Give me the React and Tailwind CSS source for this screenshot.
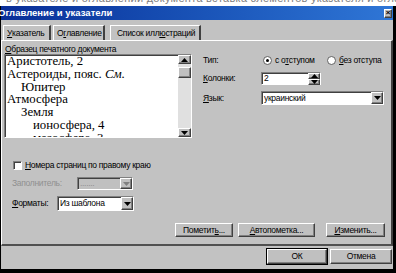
import React from "react";

const raised =
  "border border-t-white border-l-white border-r-[#404040] border-b-[#404040] shadow-[inset_-1px_-1px_0_#808080] bg-[#c0c0c0]";
const sunken =
  "border border-t-[#808080] border-l-[#808080] border-r-white border-b-white shadow-[inset_1px_1px_0_#404040]";

const U = ({ children }) => <span className="underline underline-offset-1">{children}</span>;

const Arrow = ({ up, gray }) => (
  <svg width="7" height="4" viewBox="0 0 7 4">
    <path d={up ? "M0 4h7L3.5 0z" : "M0 0h7L3.5 4z"} fill={gray ? "#808080" : "#000"} />
  </svg>
);

const Radio = ({ checked }) => (
  <span className="w-[9px] h-[9px] rounded-full bg-white border border-[#606060] flex items-center justify-center">
    {checked && <span className="w-[3px] h-[3px] rounded-full bg-black" />}
  </span>
);

const Select = ({ value, width, height, disabled }) => (
  <div
    className={`${sunken} flex items-stretch ${disabled ? "bg-[#c0c0c0]" : "bg-white"}`}
    style={{ width, height }}
  >
    <span className={`flex-1 pl-[2px] flex items-center whitespace-nowrap ${disabled ? "text-[#909090]" : "text-black"}`}>
      {value}
    </span>
    <span className={`${raised} w-[12px] flex items-center justify-center`}>
      <Arrow gray={disabled} />
    </span>
  </div>
);

const Button = ({ children, w, h, def }) => (
  <div
    className={`${raised} flex items-center justify-center whitespace-nowrap ${def ? "outline outline-1 outline-black" : ""}`}
    style={{ width: w, height: h }}
  >
    {children}
  </div>
);

const Tab = ({ children, w }) => (
  <div
    className="h-[15px] border-t border-l border-t-white border-l-white border-r-2 border-r-[#404040] flex items-center pl-[3px] whitespace-nowrap"
    style={{ width: w }}
  >
    {children}
  </div>
);

const items = [
  { t: "Аристотель, 2", i: 0 },
  { t: <>Астероиды, пояс. <i>См.</i></>, i: 0 },
  { t: "Юпитер", i: 14 },
  { t: "Атмосфера", i: 0 },
  { t: "Земля", i: 14 },
  { t: "ионосфера, 4", i: 26 },
  { t: "мезосфера, 3", i: 26 },
];

export default function App() {
  return (
    <div className="w-[396px] h-[273px] bg-black flex flex-col overflow-hidden font-['Liberation_Sans',Arial,sans-serif] text-[8.5px] tracking-[-0.3px] text-black">
      <div className="h-[6px] bg-white overflow-hidden">
        <div className="-mt-[10px] pl-[6px] text-[11px] text-[#808080] whitespace-nowrap tracking-wide">
          в указателе и оглавлении документа вставка элементов указателя и оглавления
        </div>
      </div>
      <div className="flex-1 flex pl-[1px] pr-[3px] pb-[4px]">
        <div className="flex-1 bg-[#c2c2c2] flex flex-col">
          <div className="h-[14px] bg-gradient-to-r from-[#0a2e98] to-[#2f76d6] flex items-center justify-between">
            <span className="-ml-[3px] text-white font-bold text-[9.5px] tracking-normal whitespace-nowrap">
              Оглавление и указатели
            </span>
            <span className={`${raised} w-[8px] h-[9px] mr-[1px] flex items-center justify-center text-[8px] font-bold leading-none`}>
              ×
            </span>
          </div>

          <div className="mt-[5px] flex pl-[2px] gap-[2px]">
            <Tab w="48px">
              <U>У</U>казатель
            </Tab>
            <Tab w="52px">
              О<U>г</U>лавление
            </Tab>
            <div className="w-[1px]" />
            <Tab w="91px">
              <span className="pl-[3px]">
                Список илл<U>ю</U>страций
              </span>
            </Tab>
          </div>

          <div className="h-[206px] border-t border-l border-t-white border-l-white border-r-2 border-b-2 border-r-[#404040] border-b-[#505050] flex flex-col">
            <div className="mt-[3px] ml-[3px] h-[10px] leading-[10px]">
              <U>О</U>бразец печатного документа
            </div>

            <div className="flex">
              <div className={`${sunken} ml-[2px] w-[188px] h-[84px] flex bg-white`}>
                <div className="flex-1 overflow-hidden pl-[2px] font-['Liberation_Serif','Times_New_Roman',serif] text-[12.8px] tracking-normal leading-[12.8px]">
                  {items.map((it, k) => (
                    <div key={k} className="whitespace-nowrap" style={{ paddingLeft: it.i }}>
                      {it.t}
                    </div>
                  ))}
                </div>
                <div className="w-[13px] bg-[#e0e0e0] flex flex-col">
                  <div className={`${raised} h-[9px] flex items-center justify-center`}>
                    <Arrow up />
                  </div>
                  <div className={`${raised} h-[11px] mt-[3px]`} />
                  <div className="flex-1" />
                  <div className={`${raised} h-[9px] flex items-center justify-center`}>
                    <Arrow />
                  </div>
                </div>
              </div>

              <div className="ml-[11px] flex flex-col">
                <div className="h-[12px] flex items-center">
                  <span className="w-[60px]">Тип:</span>
                  <Radio checked />
                  <span className="ml-[3px] w-[52px]">
                    с о<U>т</U>ступом
                  </span>
                  <Radio />
                  <span className="ml-[3px] whitespace-nowrap">
                    <U>б</U>ез отступа
                  </span>
                </div>
                <div className="mt-[6px] h-[13px] flex items-center">
                  <span className="w-[58px]">
                    <U>К</U>олонки:
                  </span>
                  <div className={`${sunken} w-[60px] h-[13px] bg-white flex`}>
                    <span className="flex-1 pl-[2px] flex items-center">2</span>
                    <div className="w-[12px] flex flex-col">
                      <span className={`${raised} flex-1 flex items-center justify-center`}>
                        <Arrow up />
                      </span>
                      <span className={`${raised} flex-1 flex items-center justify-center`}>
                        <Arrow />
                      </span>
                    </div>
                  </div>
                </div>
                <div className="mt-[6px] h-[14px] flex items-center">
                  <span className="w-[58px]">
                    <U>Я</U>зык:
                  </span>
                  <Select value="украинский" width="123px" height="14px" />
                </div>
              </div>
            </div>

            <div className="mt-[22px] ml-[11px] h-[10px] flex items-center">
              <span className={`${sunken} w-[9px] h-[9px] bg-white`} />
              <span className="ml-[3px]">
                <U>Н</U>омера страниц по правому краю
              </span>
            </div>

            <div className="mt-[7px] ml-[10px] h-[13px] flex items-center">
              <span className="w-[65px] text-[#909090]">Заполнитель:</span>
              <Select value="......." width="56px" height="13px" disabled />
            </div>

            <div className="mt-[6px] ml-[10px] h-[15px] flex items-center">
              <span className="w-[45px]">
                <U>Ф</U>орматы:
              </span>
              <Select value="Из шаблона" width="77px" height="15px" />
            </div>

            <div className="mt-[12px] pr-[6px] flex justify-end gap-[5px]">
              <Button w="58px" h="14px">
                Пометит<U>ь</U>...
              </Button>
              <Button w="77px" h="14px">
                <U>А</U>втопометка...
              </Button>
              <div className="w-[1px]" />
              <Button w="59px" h="14px">
                <U>И</U>зменить...
              </Button>
            </div>
          </div>

          <div className="pt-[3px] pr-[1px] flex justify-end gap-[3px]">
            <Button w="60px" h="15px" def>
              ОК
            </Button>
            <Button w="62px" h="15px">
              Отмена
            </Button>
          </div>
        </div>
      </div>
    </div>
  );
}
